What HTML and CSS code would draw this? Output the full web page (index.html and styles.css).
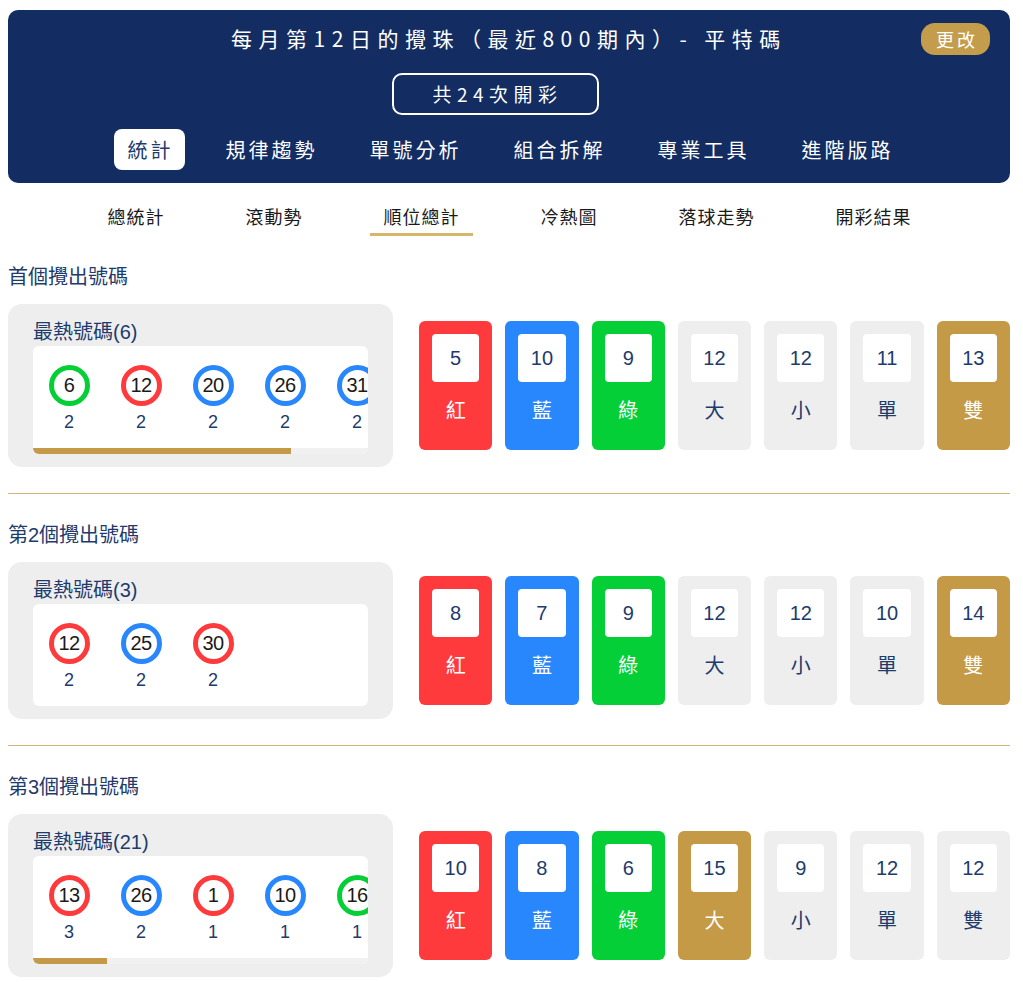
FILE: index.html
```
<!DOCTYPE html>
<html lang="zh-Hant">
<head>
<meta charset="utf-8">
<title>順位總計</title>
<link rel="stylesheet" href="styles.css">
</head>
<body>
<div class="page">
  <header class="hero">
    <h1 class="hero-title">每月第12日的攪珠（最近800期內）- 平特碼</h1>
    <button class="change-btn">更改</button>
    <div class="count-row"><div class="count-box">共24次開彩</div></div>
    <nav class="main-tabs">
      <span class="tab active">統計</span>
      <span class="tab">規律趨勢</span>
      <span class="tab">單號分析</span>
      <span class="tab">組合拆解</span>
      <span class="tab">專業工具</span>
      <span class="tab">進階版路</span>
    </nav>
  </header>

  <nav class="sub-tabs">
    <span class="sub-tab">總統計</span>
    <span class="sub-tab">滾動勢</span>
    <span class="sub-tab active">順位總計</span>
    <span class="sub-tab">冷熱圖</span>
    <span class="sub-tab">落球走勢</span>
    <span class="sub-tab">開彩結果</span>
  </nav>

  <section class="block first">
    <h2 class="block-title">首個攪出號碼</h2>
    <div class="block-row">
      <div class="hot-panel">
        <div class="hot-title">最熱號碼(6)</div>
        <div class="hot-box">
          <div class="ball-strip">
            <div class="ball-item"><span class="ball green">6</span><span class="ball-count">2</span></div>
            <div class="ball-item"><span class="ball red">12</span><span class="ball-count">2</span></div>
            <div class="ball-item"><span class="ball blue">20</span><span class="ball-count">2</span></div>
            <div class="ball-item"><span class="ball blue">26</span><span class="ball-count">2</span></div>
            <div class="ball-item"><span class="ball blue">31</span><span class="ball-count">2</span></div>
            <div class="ball-item"><span class="ball red">45</span><span class="ball-count">2</span></div>
          </div>
          <div class="strip-track"><div class="strip-thumb" style="width:77%"></div></div>
        </div>
      </div>
      <div class="cards">
        <div class="card red"><div class="card-num">5</div><div class="card-label">紅</div></div>
        <div class="card blue"><div class="card-num">10</div><div class="card-label">藍</div></div>
        <div class="card green"><div class="card-num">9</div><div class="card-label">綠</div></div>
        <div class="card grey"><div class="card-num">12</div><div class="card-label">大</div></div>
        <div class="card grey"><div class="card-num">12</div><div class="card-label">小</div></div>
        <div class="card grey"><div class="card-num">11</div><div class="card-label">單</div></div>
        <div class="card gold"><div class="card-num">13</div><div class="card-label">雙</div></div>
      </div>
    </div>
  </section>

  <section class="block">
    <h2 class="block-title">第2個攪出號碼</h2>
    <div class="block-row">
      <div class="hot-panel">
        <div class="hot-title">最熱號碼(3)</div>
        <div class="hot-box">
          <div class="ball-strip">
            <div class="ball-item"><span class="ball red">12</span><span class="ball-count">2</span></div>
            <div class="ball-item"><span class="ball blue">25</span><span class="ball-count">2</span></div>
            <div class="ball-item"><span class="ball red">30</span><span class="ball-count">2</span></div>
          </div>
        </div>
      </div>
      <div class="cards">
        <div class="card red"><div class="card-num">8</div><div class="card-label">紅</div></div>
        <div class="card blue"><div class="card-num">7</div><div class="card-label">藍</div></div>
        <div class="card green"><div class="card-num">9</div><div class="card-label">綠</div></div>
        <div class="card grey"><div class="card-num">12</div><div class="card-label">大</div></div>
        <div class="card grey"><div class="card-num">12</div><div class="card-label">小</div></div>
        <div class="card grey"><div class="card-num">10</div><div class="card-label">單</div></div>
        <div class="card gold"><div class="card-num">14</div><div class="card-label">雙</div></div>
      </div>
    </div>
  </section>

  <section class="block last">
    <h2 class="block-title">第3個攪出號碼</h2>
    <div class="block-row">
      <div class="hot-panel">
        <div class="hot-title">最熱號碼(21)</div>
        <div class="hot-box">
          <div class="ball-strip">
            <div class="ball-item"><span class="ball red">13</span><span class="ball-count">3</span></div>
            <div class="ball-item"><span class="ball blue">26</span><span class="ball-count">2</span></div>
            <div class="ball-item"><span class="ball red">1</span><span class="ball-count">1</span></div>
            <div class="ball-item"><span class="ball blue">10</span><span class="ball-count">1</span></div>
            <div class="ball-item"><span class="ball green">16</span><span class="ball-count">1</span></div>
            <div class="ball-item"><span class="ball red">19</span><span class="ball-count">1</span></div>
            <div class="ball-item"><span class="ball green">22</span><span class="ball-count">1</span></div>
            <div class="ball-item"><span class="ball green">28</span><span class="ball-count">1</span></div>
            <div class="ball-item"><span class="ball red">29</span><span class="ball-count">1</span></div>
            <div class="ball-item"><span class="ball green">33</span><span class="ball-count">1</span></div>
            <div class="ball-item"><span class="ball red">35</span><span class="ball-count">1</span></div>
            <div class="ball-item"><span class="ball blue">37</span><span class="ball-count">1</span></div>
            <div class="ball-item"><span class="ball green">38</span><span class="ball-count">1</span></div>
            <div class="ball-item"><span class="ball red">40</span><span class="ball-count">1</span></div>
            <div class="ball-item"><span class="ball blue">41</span><span class="ball-count">1</span></div>
            <div class="ball-item"><span class="ball green">43</span><span class="ball-count">1</span></div>
            <div class="ball-item"><span class="ball green">44</span><span class="ball-count">1</span></div>
            <div class="ball-item"><span class="ball red">46</span><span class="ball-count">1</span></div>
            <div class="ball-item"><span class="ball blue">47</span><span class="ball-count">1</span></div>
            <div class="ball-item"><span class="ball blue">48</span><span class="ball-count">1</span></div>
            <div class="ball-item"><span class="ball green">49</span><span class="ball-count">1</span></div>
          </div>
          <div class="strip-track"><div class="strip-thumb" style="width:22%"></div></div>
        </div>
      </div>
      <div class="cards">
        <div class="card red"><div class="card-num">10</div><div class="card-label">紅</div></div>
        <div class="card blue"><div class="card-num">8</div><div class="card-label">藍</div></div>
        <div class="card green"><div class="card-num">6</div><div class="card-label">綠</div></div>
        <div class="card gold"><div class="card-num">15</div><div class="card-label">大</div></div>
        <div class="card grey"><div class="card-num">9</div><div class="card-label">小</div></div>
        <div class="card grey"><div class="card-num">12</div><div class="card-label">單</div></div>
        <div class="card grey"><div class="card-num">12</div><div class="card-label">雙</div></div>
      </div>
    </div>
  </section>
</div>
</body>
</html>
```

FILE: styles.css
```
* { box-sizing: border-box; }

html, body {
  margin: 0;
  padding: 0;
  background: #ffffff;
}

body {
  font-family: "Liberation Sans", "Noto Sans CJK TC", sans-serif;
  color: #1d3b6c;
}

.page {
  width: 1023px;
  padding: 10px 13px 0 8px;
}

/* ---------- hero ---------- */
.hero {
  position: relative;
  background: #132d63;
  border-radius: 10px;
  padding: 14px 20px 13px;
  text-align: center;
  color: #ffffff;
}

.hero-title {
  margin: 0;
  font-family: "Noto Sans CJK TC", sans-serif;
  font-size: 21px;
  font-weight: 400;
  line-height: 28px;
  letter-spacing: 6.5px;
}

.change-btn {
  position: absolute;
  top: 13px;
  right: 20px;
  width: 69px;
  height: 32px;
  border: none;
  border-radius: 14px;
  background: #c49d4c;
  color: #ffffff;
  font-family: "Noto Sans CJK TC", sans-serif;
  font-size: 18px;
  letter-spacing: 3px;
  padding: 0 0 0 3px;
  line-height: 32px;
}

.count-row {
  display: flex;
  justify-content: center;
  padding-right: 28px;
  margin-top: 21px;
}

.count-box {
  width: 207px;
  height: 42px;
  border: 2px solid #ffffff;
  border-radius: 10px;
  font-family: "Noto Sans CJK TC", sans-serif;
  font-size: 19px;
  font-weight: 400;
  line-height: 38px;
  letter-spacing: 5.5px;
  padding-left: 5px;
}

.main-tabs {
  display: flex;
  justify-content: center;
  gap: 27px;
  margin-top: 14px;
}

.tab {
  padding: 0 11px 0 14px;
  height: 41px;
  line-height: 41px;
  font-family: "Noto Sans CJK TC", sans-serif;
  font-size: 20px;
  font-weight: 400;
  letter-spacing: 3px;
  border-radius: 8px;
  color: #ffffff;
}

.tab.active {
  background: #ffffff;
  color: #1d3b6c;
}

/* ---------- sub tabs ---------- */
.sub-tabs {
  display: flex;
  justify-content: center;
  gap: 54px;
  margin-top: 13px;
}

.sub-tab {
  padding: 8px 13px 5px 14px;
  font-family: "Noto Sans CJK TC", sans-serif;
  font-size: 18px;
  line-height: 24px;
  letter-spacing: 1px;
  color: #1a1a1a;
  border-bottom: 3px solid transparent;
}

.sub-tab.active {
  border-bottom-color: #d6b66b;
}

/* ---------- blocks ---------- */
.block {
  padding: 28px 0 26px;
  border-bottom: 1px solid #d2b47c;
}

.block.last {
  border-bottom: none;
  padding-bottom: 6px;
}

.block-title {
  margin: 0 0 14px;
  font-size: 20px;
  font-weight: 400;
  line-height: 26px;
  color: #1d3b6c;
}

.block-row {
  display: flex;
  align-items: center;
  gap: 26px;
}

.hot-panel {
  flex: 0 0 385px;
  width: 385px;
  min-width: 0;
  background: #eeeeee;
  border-radius: 14px;
  padding: 14px 25px 13px;
}

.hot-title {
  font-size: 20px;
  line-height: 28px;
  color: #1d3b6c;
}

.hot-box {
  background: #ffffff;
  border-radius: 6px;
  overflow: hidden;
}

.ball-strip {
  display: flex;
  overflow: hidden;
  padding: 19px 0 15px;
}

.ball-item {
  flex: 0 0 72px;
  display: flex;
  flex-direction: column;
  align-items: center;
}

.ball {
  width: 41px;
  height: 41px;
  border-radius: 50%;
  border: 5px solid #ccc;
  background: #ffffff;
  display: flex;
  align-items: center;
  justify-content: center;
  font-size: 20px;
  color: #1c1a17;
  letter-spacing: -0.5px;
}

.ball.red { border-color: #ff3a3d; }
.ball.blue { border-color: #2887fd; }
.ball.green { border-color: #04cf36; }

.ball-count {
  margin-top: 5px;
  font-size: 18px;
  line-height: 22px;
  color: #1d3b6c;
}

.strip-track {
  height: 6px;
  background: #f1f1f1;
}

.strip-thumb {
  height: 100%;
  background: #c49a48;
}

/* ---------- cards ---------- */
.cards {
  flex: 1;
  min-width: 0;
  display: flex;
  gap: 13px;
}

.card {
  flex: 1;
  min-width: 0;
  border-radius: 6px;
  padding: 13px 13px 12px;
  text-align: center;
  color: #ffffff;
}

.card.red { background: #ff3a3d; }
.card.blue { background: #2887fd; }
.card.green { background: #04cf36; }
.card.gold { background: #c49a47; }
.card.grey { background: #eeeeee; color: #1d3b6c; }

.card-num {
  height: 48px;
  line-height: 48px;
  background: #ffffff;
  border-radius: 4px;
  font-size: 20px;
  color: #1d3b6c;
}

.card-label {
  height: 56px;
  line-height: 56px;
  font-family: "Noto Sans CJK TC", sans-serif;
  font-size: 20px;
}
```
